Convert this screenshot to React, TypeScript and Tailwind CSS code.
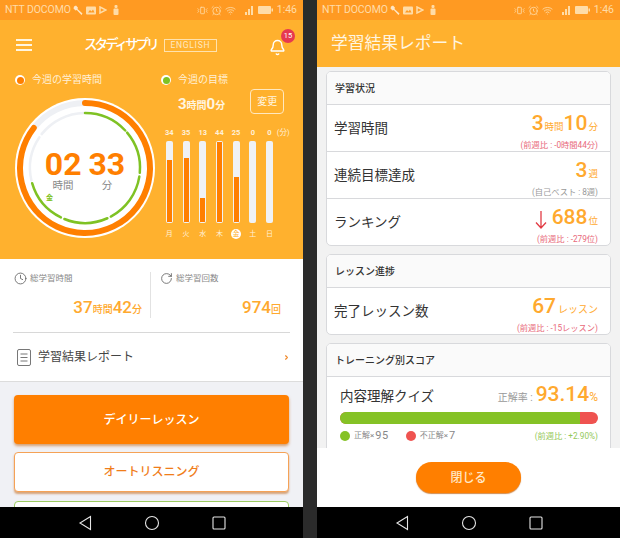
import { AlarmClock, Bell, ChevronRight, Clock, RotateCw, Vibrate, Wifi } from 'lucide-react';

const bars = [
  { day: '月', min: 34 },
  { day: '火', min: 35 },
  { day: '水', min: 13 },
  { day: '木', min: 44 },
  { day: '金', min: 25, today: true },
  { day: '土', min: 0 },
  { day: '日', min: 0 },
];

const polar = (r: number, deg: number) => {
  const a = ((deg - 90) * Math.PI) / 180;
  return [70 + r * Math.cos(a), 70 + r * Math.sin(a)];
};

const arc = (r: number, from: number, to: number) => {
  const [x1, y1] = polar(r, from);
  const [x2, y2] = polar(r, to);
  return `M${x1} ${y1}A${r} ${r} 0 ${to - from > 180 ? 1 : 0} 1 ${x2} ${y2}`;
};

const StatusBar = () => (
  <div className="flex h-5 shrink-0 items-center bg-[#ff9a22] pl-[5px] pr-[6px] text-[10.5px] text-[#ffdca8]">
    <span className="tracking-[-0.1px]">NTT DOCOMO</span>
    <div className="ml-[2px] flex items-center gap-[3px]">
      <svg width="10" height="10" viewBox="0 0 10 10" fill="#ffe6c4">
        <path d="M1 1.5 3 .5l2 2.2L4.5 4l5 4.5L8.500 10 3.800 5.100 2.500 5.500.5 3.500z" />
      </svg>
      <svg width="10" height="9" viewBox="0 0 10 9" fill="#ffdca8">
        <rect width="10" height="8" y=".5" rx="1" />
        <path d="M2 6.500 4 4l1.500 1.500L7 3.500l1.500 3z" fill="#ff9a22" />
      </svg>
      <svg width="8" height="8" viewBox="0 0 8 8" fill="none" stroke="#ffdca8" strokeWidth="1.500">
        <path d="M1 1l6 3-6 3z" />
      </svg>
      <svg className="ml-[3px]" width="6" height="10" viewBox="0 0 6 10" fill="#ffdca8">
        <rect x="1.500" width="3" height="3" rx="1" />
        <rect y="3.500" x=".5" width="5" height="6.500" rx="1" />
      </svg>
    </div>
    <div className="ml-auto flex items-center gap-[3px]">
      <Vibrate size={11} strokeWidth={1.8} />
      <AlarmClock size={11} strokeWidth={1.8} />
      <Wifi size={11} strokeWidth={1.8} />
      <svg className="ml-[4px]" width="10" height="9" viewBox="0 0 10 9" fill="#ffdca8">
        <path d="M8 0h2v9H8zM5 3h2v6H5zM2 6h2v3H2z" />
      </svg>
      <svg className="ml-[2px]" width="15" height="8" viewBox="0 0 15 8" fill="#ffdca8">
        <rect width="13" height="8" rx="1" />
        <rect x="13.500" y="2.500" width="1.500" height="3" />
      </svg>
      <span className="ml-[1px]">1:46</span>
    </div>
  </div>
);

const NavBar = () => (
  <div className="flex h-[31px] shrink-0 items-center justify-center gap-[47px] bg-black">
    <svg width="20" height="20" viewBox="0 0 20 20" fill="none" stroke="#e5e5e5" strokeWidth="1.100">
      <path d="M15.500 3.500v13L5 10z" />
    </svg>
    <svg width="20" height="20" viewBox="0 0 20 20" fill="none" stroke="#e5e5e5" strokeWidth="1.100">
      <circle cx="10" cy="10" r="6.500" />
    </svg>
    <svg width="20" height="20" viewBox="0 0 20 20" fill="none" stroke="#e5e5e5" strokeWidth="1.100">
      <rect x="4" y="4" width="12" height="12" rx="1" />
    </svg>
  </div>
);

const Ring = () => (
  <div className="relative h-[140px] w-[140px] rounded-full bg-white">
    <svg width="140" height="140" viewBox="0 0 140 140" fill="none" strokeLinecap="round">
      <path d={arc(65, 308, 360)} stroke="#eef0f4" strokeWidth="6" strokeLinecap="butt" />
      <path d={arc(65, 0, 308)} stroke="#ff7f00" strokeWidth="6" />
      <path d={arc(55, 257, 304)} stroke="#eef0f4" strokeWidth="2.500" />
      <path d={arc(55, 308, 359)} stroke="#eef0f4" strokeWidth="2.500" />
      <path d={arc(55, 0, 47)} stroke="#7fc224" strokeWidth="2.500" />
      <path d={arc(55, 50, 95)} stroke="#7fc224" strokeWidth="2.500" />
      <path d={arc(55, 99, 152)} stroke="#7fc224" strokeWidth="2.500" />
      <path d={arc(55, 156, 202)} stroke="#7fc224" strokeWidth="2.500" />
      <path d={arc(55, 206, 254)} stroke="#7fc224" strokeWidth="2.500" />
    </svg>
    <div className="absolute inset-0 flex flex-col items-center pt-[51px]">
      <div className="flex gap-[7px] text-[32px] font-bold leading-[30px] text-[#ff7f00]">
        <span>02</span>
        <span>33</span>
      </div>
      <div className="flex text-[10.5px] leading-[14px] text-[#888]">
        <span className="w-[44px] text-center">時間</span>
        <span className="w-[44px] text-center">分</span>
      </div>
    </div>
    <span className="absolute left-[31px] top-[95px] text-[7px] font-bold text-[#7fc224]">金</span>
  </div>
);

const Legend = ({ dot, label }: { dot: string; label: string }) => (
  <div className="flex items-center gap-[7px]">
    <span className="flex h-[10px] w-[10px] items-center justify-center rounded-full bg-white">
      <span className={`h-[7px] w-[7px] rounded-full ${dot}`} />
    </span>
    <span className="text-[10px] leading-[14px] text-[#fff0d8]">{label}</span>
  </div>
);

const BarChart = () => (
  <div className="flex">
    {bars.map((b) => (
      <div key={b.day} className="flex w-[16.7px] flex-col items-center">
        <span className="text-[7.5px] font-bold leading-[10px] text-[#fff0d8]">{b.min}</span>
        <div className="mt-[3px] flex h-[82px] w-[7px] items-end rounded-[2px] bg-[#f0f2f5] p-[1px]">
          <div className="w-full bg-[#ff7f00]" style={{ height: `${(b.min / 44) * 100}%` }} />
        </div>
        {b.today ? (
          <span className="mt-[6px] flex h-[10px] w-[10px] items-center justify-center rounded-full bg-white text-[7px] leading-none text-[#ffb12e]">
            {b.day}
          </span>
        ) : (
          <span className="mt-[6px] text-[7px] leading-[10px] text-[#fff0d8]">{b.day}</span>
        )}
      </div>
    ))}
    <span className="-ml-[1px] text-[7.5px] leading-[10px] text-[#fff0d8]">(分)</span>
  </div>
);

const Home = () => (
  <div className="flex h-[538px] w-[303px] flex-col bg-[#f0f1f5]">
    <StatusBar />
    <div className="h-[487px] overflow-hidden">
      <div className="h-[239px] bg-[#ffb12e]">
        <div className="flex h-[50px] items-center pl-[16px] pr-[17px]">
          <div className="flex w-[16px] flex-col gap-[3px]">
            <span className="h-[2px] bg-[#fff5e0]" />
            <span className="h-[2px] bg-[#fff5e0]" />
            <span className="h-[2px] bg-[#fff5e0]" />
          </div>
          <div className="ml-[52px] flex items-center gap-[7px]">
            <span className="text-[13.5px] font-medium leading-none tracking-[-3px] text-white">スタディサプリ</span>
            <span className="border border-[#ffe2ae] px-[6px] text-[8.5px] leading-[11px] tracking-[0.7px] text-[#ffe8c0]">
              ENGLISH
            </span>
          </div>
          <div className="relative ml-auto mt-[4px]">
            <Bell size={17} className="text-white" strokeWidth={2} />
            <span className="absolute -right-[9px] -top-[10px] flex h-[14px] w-[14px] items-center justify-center rounded-full bg-[#e63950] text-[7.5px] text-white">
              15
            </span>
          </div>
        </div>
        <div className="flex">
          <div className="pl-[15px]">
            <div className="flex h-[28px] items-start pt-[3px]">
              <Legend dot="bg-[#ff7f00]" label="今週の学習時間" />
            </div>
            <Ring />
          </div>
          <div className="ml-[6px] flex flex-col">
            <div className="h-[19px] pt-[3px]">
              <Legend dot="bg-[#7fc224]" label="今週の目標" />
            </div>
            <div className="flex items-start pl-[17px]">
              <div className="mt-[6px] flex items-baseline text-[15px] font-bold leading-[18px] text-[#fff5e0]">
                3<span className="text-[10px]">時間</span>0<span className="text-[10px]">分</span>
              </div>
              <span className="ml-[25px] flex h-[25px] w-[34px] items-center justify-center rounded-[4px] border border-[#ffe8c0] text-[10px] text-[#fff5e0]">
                変更
              </span>
            </div>
            <div className="mt-[13px]">
              <BarChart />
            </div>
          </div>
        </div>
      </div>
      <div className="h-[123px] border-b border-[#dcdcdc] bg-white px-[13px]">
        <div className="flex h-[74px] items-start border-b border-[#d8d8d8] pt-[13px]">
          <div className="h-[46px] w-[138px] border-r border-[#e2e2e2]">
            <div className="flex items-center gap-[3px] pl-[1px]">
              <Clock size={13} className="text-[#666]" strokeWidth={1.6} />
              <span className="text-[8.5px] text-[#888]">総学習時間</span>
            </div>
            <div className="mt-[12px] flex items-baseline justify-end pr-[8px] text-[17px] font-medium leading-[20px] text-[#ffa92e]">
              37<span className="text-[10px]">時間</span>42<span className="text-[10px]">分</span>
            </div>
          </div>
          <div className="h-[46px] flex-1 pl-[9px]">
            <div className="flex items-center gap-[3px]">
              <RotateCw size={13} className="text-[#666]" strokeWidth={1.6} />
              <span className="text-[8.5px] text-[#888]">総学習回数</span>
            </div>
            <div className="mt-[12px] flex items-baseline justify-end pr-[9px] text-[17px] font-medium leading-[20px] text-[#ffa92e]">
              974<span className="text-[10px]">回</span>
            </div>
          </div>
        </div>
        <div className="flex h-[48px] items-center pl-[4px]">
          <svg width="14" height="17" viewBox="0 0 14 17" fill="none" stroke="#777" strokeWidth="1">
            <rect x=".5" y=".5" width="13" height="16" rx="1.500" />
            <path d="M3.500 5h7M3.500 8.500h7M3.500 12h7" />
          </svg>
          <span className="ml-[7px] text-[12px] text-[#444]">学習結果レポート</span>
          <ChevronRight size={7} className="ml-auto text-[#f0892a]" strokeWidth={4} />
        </div>
      </div>
      <div className="flex flex-col px-[14px] pt-[13px]">
        <div className="flex h-[49px] items-center justify-center rounded-[4px] bg-[#ff7f00] text-[12px] font-medium text-white shadow-[0_2px_3px_rgba(190,90,0,0.55)]">
          デイリーレッスン
        </div>
        <div className="mt-[8px] flex h-[40px] items-center justify-center rounded-[4px] border border-[#f5a256] bg-white text-[12px] font-medium text-[#f07d1a] shadow-[0_2px_2px_rgba(190,90,0,0.5)]">
          オートリスニング
        </div>
        <div className="mt-[9px] h-[40px] rounded-[4px] border border-[#9ccb62] bg-white" />
      </div>
    </div>
    <NavBar />
  </div>
);

const Card = ({ title, children }: { title: string; children: React.ReactNode }) => (
  <div className="overflow-hidden rounded-[5px] border border-[#d8d9dc] bg-white">
    <div className="flex h-[33px] items-center border-b border-[#d8d9dc] bg-[#fafafa] pl-[8px] text-[10px] font-medium text-[#333]">
      {title}
    </div>
    {children}
  </div>
);

const Row = ({
  label,
  value,
  note,
  noteColor,
  last,
}: {
  label: string;
  value: React.ReactNode;
  note: string;
  noteColor: string;
  last?: boolean;
}) => (
  <div className={`flex items-center justify-between pl-[7px] pr-[12px] ${last ? 'h-[46px]' : 'h-[47px] border-b border-[#d8d9dc]'}`}>
    <span className="text-[13.5px] text-[#333]">{label}</span>
    <div className="flex flex-col items-end pt-[6px]">
      <div className="flex items-baseline text-[21px] font-medium leading-[24px] text-[#ffa92e]">{value}</div>
      <span className={`text-[8.25px] leading-[12px] ${noteColor}`}>{note}</span>
    </div>
  </div>
);

const Unit = ({ children }: { children: React.ReactNode }) => (
  <span className="ml-[1px] text-[9.5px] font-normal">{children}</span>
);

const Report = () => (
  <div className="flex h-[538px] w-[303px] flex-col bg-[#f2f2f2]">
    <StatusBar />
    <div className="flex h-[47px] shrink-0 items-center bg-[#ffb12e] pl-[14px] text-[16.75px] text-[#fff5e0]">
      学習結果レポート
    </div>
    <div className="h-[381px] overflow-hidden px-[9px] pt-[4px]">
      <Card title="学習状況">
        <Row
          label="学習時間"
          value={
            <>
              3<Unit>時間</Unit>10<Unit>分</Unit>
            </>
          }
          note="(前週比 : -0時間44分)"
          noteColor="text-[#e8697a]"
        />
        <Row
          label="連続目標達成"
          value={
            <>
              3<Unit>週</Unit>
            </>
          }
          note="(自己ベスト : 8週)"
          noteColor="text-[#999]"
        />
        <Row
          label="ランキング"
          value={
            <>
              <svg className="mr-[5px] self-center" width="12" height="19" viewBox="0 0 12 19" fill="none" stroke="#e23b44" strokeWidth="1.300">
                <path d="M6 1v17M1 12.500 6 18l5-5.500" />
              </svg>
              688<Unit>位</Unit>
            </>
          }
          note="(前週比 : -279位)"
          noteColor="text-[#e8697a]"
          last
        />
      </Card>
      <div className="mt-[8px]">
        <Card title="レッスン進捗">
          <Row
            label="完了レッスン数"
            value={
              <>
                67<span className="ml-[2px] text-[10px] font-normal">レッスン</span>
              </>
            }
            note="(前週比 : -15レッスン)"
            noteColor="text-[#e8697a]"
            last
          />
        </Card>
      </div>
      <div className="mt-[8px]">
        <Card title="トレーニング別スコア">
          <div className="pl-[13px] pr-[12px] pt-[5px]">
            <div className="flex items-baseline justify-between">
              <span className="text-[13.5px] text-[#333]">内容理解クイズ</span>
              <div className="flex items-baseline leading-[24px] text-[#999]">
                <span className="mr-[3px] text-[10px]">正解率 :</span>
                <span className="text-[21px] font-medium text-[#ffa92e]">93.14</span>
                <span className="text-[12px] text-[#ffa92e]">%</span>
              </div>
            </div>
            <div className="mt-[2px] flex h-[12px] overflow-hidden rounded-full bg-[#ef5350]">
              <div className="h-full w-[93%] bg-[#85c226]" />
            </div>
            <div className="mt-[4px] flex items-center text-[#888]">
              <span className="h-[10px] w-[10px] rounded-full bg-[#85c226]" />
              <span className="ml-[4px] text-[8px]">正解×</span>
              <span className="ml-[1px] text-[11px] tracking-[0.5px]">95</span>
              <span className="ml-[17px] h-[10px] w-[10px] rounded-full bg-[#ef5350]" />
              <span className="ml-[4px] text-[8px]">不正解×</span>
              <span className="ml-[1px] text-[11px]">7</span>
              <span className="ml-auto text-[8.25px] text-[#93c95a]">(前週比 : +2.90%)</span>
            </div>
          </div>
          <div className="h-[20px]" />
        </Card>
      </div>
    </div>
    <div className="flex h-[59px] shrink-0 items-center justify-center bg-white">
      <span className="flex h-[31px] w-[105px] items-center justify-center rounded-full bg-[#ff7f00] text-[12px] font-medium text-[#ffe8c8] shadow-[0_1px_1px_rgba(190,90,0,0.7)]">
        閉じる
      </span>
    </div>
    <NavBar />
  </div>
);

export default function App() {
  return (
    <div className="flex h-[538px] w-[620px] justify-between bg-[#2b2b2b] [font-family:Roboto,'Noto_Sans_CJK_JP',sans-serif]">
      <Home />
      <Report />
    </div>
  );
}
